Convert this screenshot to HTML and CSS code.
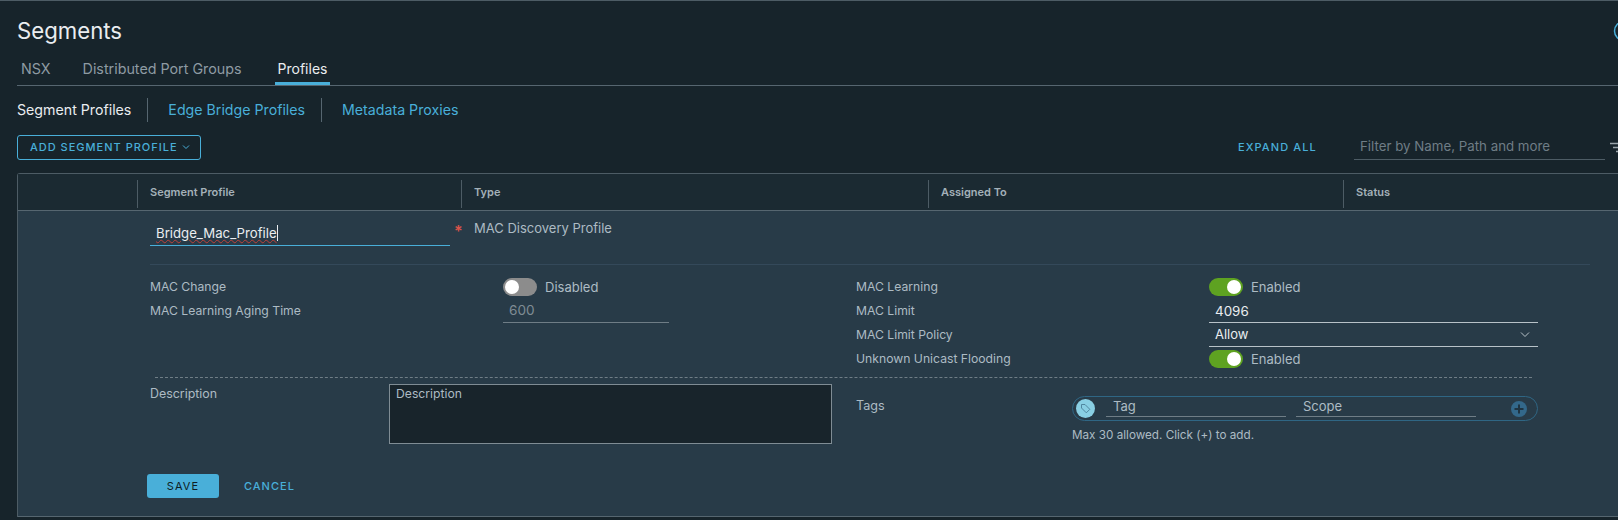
FILE: index.html
```html
<!DOCTYPE html>
<html>
<head>
    <title>Segments</title>
    <link rel="stylesheet" href="styles.css">
</head>
<body>
<div class="page">
    <div class="title-row">
        <h1>Segments</h1>
        <svg class="help" width="22" height="22" viewBox="0 0 22 22"><circle cx="11" cy="11" r="9.5" fill="none" stroke="#49afd9" stroke-width="1.5"/></svg>
    </div>
    <div class="tabs">
        <a class="tab tab-nsx">NSX</a>
        <a class="tab tab-ports">Distributed Port Groups</a>
        <a class="tab active">Profiles</a>
    </div>
    <div class="subnav">
        <a class="sub current">Segment Profiles</a>
        <a class="sub">Edge Bridge Profiles</a>
        <a class="sub">Metadata Proxies</a>
    </div>
    <div class="toolbar">
        <button class="btn-outline">ADD SEGMENT PROFILE
            <svg width="8" height="6" viewBox="0 0 8 6"><path d="M1 1.5 4 4.5 7 1.5" fill="none" stroke="#49afd9" stroke-width="1"/></svg>
        </button>
        <a class="expand">EXPAND ALL</a>
        <div class="filter">Filter by Name, Path and more</div>
        <svg class="filter-icon" width="16" height="12" viewBox="0 0 16 12"><path d="M0 1.5H16M3 5.5H16M6 9.5H16" stroke="#9aa5ab" stroke-width="1.3"/></svg>
    </div>

    <div class="grid">
        <div class="grid-head">
            <div class="head-spacer"></div>
            <div class="head-cell">Segment Profile</div>
            <div class="head-cell">Type</div>
            <div class="head-cell">Assigned To</div>
            <div class="head-cell">Status</div>
        </div>
        <div class="detail">
            <div class="name-row">
                <div class="name-input"><span class="name-text">Bridge_Mac_Profile</span></div>
                <span class="required">*</span>
                <span class="type-text">MAC Discovery Profile</span>
            </div>
            <div class="fields">
                <div class="field-col">
                    <div class="field">
                        <label>MAC Change</label>
                        <span class="toggle"></span><span class="toggle-text">Disabled</span>
                    </div>
                    <div class="field">
                        <label>MAC Learning Aging Time</label>
                        <div class="input input-short muted">600</div>
                    </div>
                </div>
                <div class="field-col">
                    <div class="field">
                        <label>MAC Learning</label>
                        <span class="toggle on"></span><span class="toggle-text">Enabled</span>
                    </div>
                    <div class="field">
                        <label>MAC Limit</label>
                        <div class="input input-long">4096</div>
                    </div>
                    <div class="field">
                        <label>MAC Limit Policy</label>
                        <div class="input input-long select">Allow
                            <svg width="10" height="7" viewBox="0 0 10 7"><path d="M1 1.5 5 5.5 9 1.5" fill="none" stroke="#b8c2c8" stroke-width="1"/></svg>
                        </div>
                    </div>
                    <div class="field">
                        <label>Unknown Unicast Flooding</label>
                        <span class="toggle on"></span><span class="toggle-text">Enabled</span>
                    </div>
                </div>
            </div>
            <div class="dashed"></div>
            <div class="extra">
                <label class="desc-label">Description</label>
                <div class="textarea">Description</div>
                <label class="tags-label">Tags</label>
                <div class="tags">
                    <div class="tag-pill">
                        <span class="tag-icon">
                            <svg width="11" height="11" viewBox="0 0 11 11"><path d="M1.5 1.5H5L9.8 6.3 6.3 9.8 1.5 5Z" fill="none" stroke="#4b7f97" stroke-width="0.9"/></svg>
                        </span>
                        <div class="tag-input tag-first">Tag</div>
                        <div class="tag-input">Scope</div>
                        <svg class="tag-add" width="16" height="16" viewBox="0 0 16 16"><circle cx="8" cy="8" r="8" fill="#33688a"/><path d="M8 3.5V12.5M3.5 8H12.5" stroke="#1f3442" stroke-width="2"/></svg>
                    </div>
                    <div class="hint">Max 30 allowed. Click (+) to add.</div>
                </div>
            </div>
            <div class="actions">
                <button class="btn-save">SAVE</button>
                <a class="cancel">CANCEL</a>
            </div>
        </div>
    </div>
</div>
</body>
</html>
```
FILE: styles.css
```css
html, body {
    margin: 0;
    padding: 0;
    height: 520px;
    overflow: hidden;
    background-color: #17242b;
}
body {
    font-family: Inter, "Liberation Sans", sans-serif;
    font-size: 13px;
    color: #adbbc4;
}
.page {
    border-top: 1px solid #4d5c65;
}
.title-row {
    display: flex;
    justify-content: space-between;
    align-items: center;
    height: 30px;
    margin-top: 15px;
    padding-left: 17px;
}
h1 {
    margin: 0 0 2px;
    font-size: 22.2px;
    font-weight: 400;
    color: #eaedf0;
}
.help {
    margin-right: -17px;
}
.tabs {
    display: flex;
    margin-left: 17px;
    border-bottom: 1px solid #566670;
    box-sizing: border-box;
    height: 40px;
}
.tab {
    height: 39px;
    line-height: 46px;
    font-size: 14.3px;
    color: #8e9ba3;
    box-sizing: border-box;
}
.tab-nsx {
    margin-left: 4px;
}
.tab-ports {
    margin-left: 32px;
}
.tab.active {
    margin-left: 33px;
    padding: 0 3px;
    font-size: 14px;
    color: #eaedf0;
    border-bottom: 3px solid #49afd9;
}
.subnav {
    display: flex;
    align-items: center;
    height: 49px;
    padding-bottom: 2px;
    box-sizing: border-box;
    margin-left: 17px;
}
.sub {
    font-size: 14.2px;
    color: #49afd9;
    height: 24px;
    line-height: 24px;
    padding: 0 16px 0 20px;
    border-right: 1px solid #566670;
}
.sub:last-child {
    border-right: none;
}
.sub.current {
    padding-left: 0;
    color: #eaedf0;
}
.toolbar {
    display: flex;
    align-items: center;
    height: 25px;
    margin-left: 17px;
}
.btn-outline {
    display: flex;
    flex: none;
    align-items: center;
    gap: 4px;
    width: 184px;
    height: 25px;
    padding: 0 0 2px 12px;
    background: transparent;
    border: 1px solid #49afd9;
    border-radius: 3px;
    font-family: inherit;
    font-size: 11px;
    font-weight: 500;
    letter-spacing: 1px;
    color: #49afd9;
}
.expand {
    flex: none;
    margin-left: 1037px;
    width: 116px;
    font-size: 11px;
    font-weight: 500;
    letter-spacing: 1.1px;
    color: #49afd9;
    padding-bottom: 2px;
}
.filter {
    flex: none;
    width: 251px;
    height: 25px;
    line-height: 23px;
    padding-left: 6px;
    border-bottom: 1px solid #4d5c65;
    box-sizing: border-box;
    font-size: 13.3px;
    color: #6f7d86;
}
.filter-icon {
    flex: none;
    margin-left: 5px;
}
.grid {
    margin: 13px 0 0 17px;
    border-top: 1px solid #4d5c65;
    border-left: 1px solid #4d5c65;
    border-top-left-radius: 3px;
}
.grid-head {
    display: grid;
    grid-template-columns: 119px 324px 467px 415px 1fr;
    height: 36px;
    background-color: #1b2a32;
    border-bottom: 1px solid #566670;
}
.head-cell {
    margin: 6px 0 2px;
    padding-left: 12px;
    border-left: 1px solid #4d5c65;
    line-height: 25px;
    font-size: 11px;
    font-weight: 600;
    color: #a4b1b9;
}
.detail {
    height: 305px;
    padding-left: 132px;
    background-color: #283b48;
    border-bottom: 1px solid #566670;
}
.name-row {
    display: flex;
    height: 54px;
    border-bottom: 1px solid #34495a;
    box-sizing: border-box;
    width: 1440px;
}
.name-input {
    width: 300px;
    height: 35px;
    padding-left: 6px;
    line-height: 44px;
    border-bottom: 1px solid #49afd9;
    box-sizing: border-box;
    font-size: 13.2px;
    color: #eaedf0;
}
.name-text {
    text-decoration: underline wavy #c0413a 1px;
    border-right: 1px solid #eaedf0;
}
.required {
    width: 24px;
    padding-left: 4px;
    line-height: 40px;
    box-sizing: border-box;
    font-size: 16px;
    font-weight: 600;
    color: #d9534a;
}
.type-text {
    line-height: 34px;
    font-size: 13px;
}
.fields {
    display: grid;
    grid-template-columns: 706px 1fr;
    margin-top: 10px;
    height: 96px;
}
.field {
    display: flex;
    align-items: center;
    height: 24px;
}
label {
    flex: none;
    width: 353px;
    padding-bottom: 2px;
    font-size: 12.2px;
}
.toggle {
    position: relative;
    flex: none;
    width: 34px;
    height: 18px;
    border-radius: 9px;
    background-color: #8c8c8c;
}
.toggle::after {
    content: "";
    position: absolute;
    top: 2px;
    left: 2px;
    width: 14px;
    height: 14px;
    border-radius: 50%;
    background-color: #fff;
}
.toggle.on {
    background-color: #5ea221;
}
.toggle.on::after {
    left: 18px;
}
.toggle-text {
    margin-left: 8px;
}
.input {
    height: 24px;
    line-height: 23px;
    padding-left: 6px;
    border-bottom: 1px solid #b8c2c8;
    box-sizing: border-box;
    color: #eaedf0;
}
.input-short {
    width: 166px;
    border-bottom-color: #6f7d86;
    font-size: 13.6px;
}
.input-long {
    width: 329px;
    line-height: 25px;
    font-size: 13.4px;
}
.muted {
    color: #7f8c94;
}
.select {
    display: flex;
    justify-content: space-between;
    align-items: center;
    padding-right: 8px;
    font-size: 13px;
}
.dashed {
    width: 1377px;
    margin: 6px 0 0 5px;
    border-top: 1px dashed #6f7d86;
}
.extra {
    display: flex;
    margin-top: 6px;
}
.desc-label {
    width: 239px;
    padding-bottom: 0;
    font-size: 12.4px;
    line-height: 20px;
}
.textarea {
    width: 443px;
    height: 60px;
    padding-left: 6px;
    line-height: 18px;
    font-size: 12.2px;
    background-color: #18242b;
    border: 1px solid #7f8c94;
    box-sizing: border-box;
}
.tags-label {
    width: 216px;
    margin-left: 24px;
    padding: 13px 0 0;
    line-height: 18px;
    font-size: 12.6px;
}
.tags {
    padding-top: 12px;
}
.tag-pill {
    display: flex;
    align-items: center;
    width: 466px;
    height: 25px;
    padding-left: 3px;
    border: 1px solid #2f6684;
    border-radius: 13px;
    box-sizing: border-box;
}
.tag-icon {
    display: flex;
    flex: none;
    justify-content: center;
    align-items: center;
    width: 19px;
    height: 19px;
    border-radius: 50%;
    background-color: #89cfe3;
}
.tag-input {
    flex: none;
    width: 180px;
    height: 20px;
    line-height: 18px;
    padding-left: 7px;
    margin-top: -3px;
    margin-left: 10px;
    border-bottom: 1px solid #6f7d86;
    box-sizing: border-box;
}
.tag-first {
    margin-left: 11px;
}
.tag-add {
    flex: none;
    margin-left: 35px;
}
.hint {
    margin-top: 7px;
    font-size: 11.7px;
}
.actions {
    display: flex;
    align-items: center;
    margin: 30px 0 0 -3px;
}
.btn-save {
    width: 72px;
    height: 24px;
    padding: 0 0 1px;
    background-color: #49afd9;
    border: none;
    border-radius: 3px;
    font-family: inherit;
    font-size: 11px;
    font-weight: 400;
    letter-spacing: 1.1px;
    color: #0f1d24;
}
.cancel {
    margin-left: 25px;
    font-size: 11px;
    font-weight: 500;
    letter-spacing: 1px;
    color: #49afd9;
}
```
